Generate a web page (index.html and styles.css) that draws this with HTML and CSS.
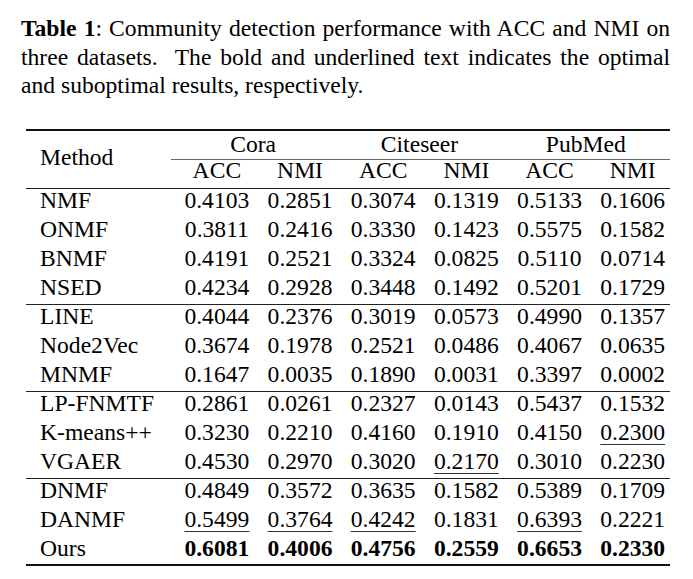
FILE: index.html
```html
<!DOCTYPE html>
<html lang="en">
<head>
<meta charset="utf-8">
<title>Table 1</title>
<link rel="stylesheet" href="styles.css">
</head>
<body>
<div class="page">
  <p class="caption">
    <span class="line"><b>Table 1</b>: Community detection performance with ACC and NMI on</span>
    <span class="line">three datasets.&nbsp; The bold and underlined text indicates the optimal</span>
    <span class="line last">and suboptimal results, respectively.</span>
  </p>

  <div class="table">
    <div class="thead">
      <div class="method-h">Method</div>
      <div class="ds">Cora</div>
      <div class="ds">Citeseer</div>
      <div class="ds">PubMed</div>
      <div class="sub">ACC</div>
      <div class="sub">NMI</div>
      <div class="sub">ACC</div>
      <div class="sub">NMI</div>
      <div class="sub">ACC</div>
      <div class="sub">NMI</div>
    </div>

    <div class="tbody">
      <div class="row first">
        <div class="m">NMF</div><div class="n">0.4103</div><div class="n">0.2851</div><div class="n">0.3074</div><div class="n">0.1319</div><div class="n">0.5133</div><div class="n">0.1606</div>
      </div>
      <div class="row">
        <div class="m">ONMF</div><div class="n">0.3811</div><div class="n">0.2416</div><div class="n">0.3330</div><div class="n">0.1423</div><div class="n">0.5575</div><div class="n">0.1582</div>
      </div>
      <div class="row">
        <div class="m">BNMF</div><div class="n">0.4191</div><div class="n">0.2521</div><div class="n">0.3324</div><div class="n">0.0825</div><div class="n">0.5110</div><div class="n">0.0714</div>
      </div>
      <div class="row">
        <div class="m">NSED</div><div class="n">0.4234</div><div class="n">0.2928</div><div class="n">0.3448</div><div class="n">0.1492</div><div class="n">0.5201</div><div class="n">0.1729</div>
      </div>

      <div class="row first">
        <div class="m">LINE</div><div class="n">0.4044</div><div class="n">0.2376</div><div class="n">0.3019</div><div class="n">0.0573</div><div class="n">0.4990</div><div class="n">0.1357</div>
      </div>
      <div class="row">
        <div class="m">Node2Vec</div><div class="n">0.3674</div><div class="n">0.1978</div><div class="n">0.2521</div><div class="n">0.0486</div><div class="n">0.4067</div><div class="n">0.0635</div>
      </div>
      <div class="row">
        <div class="m">MNMF</div><div class="n">0.1647</div><div class="n">0.0035</div><div class="n">0.1890</div><div class="n">0.0031</div><div class="n">0.3397</div><div class="n">0.0002</div>
      </div>

      <div class="row first">
        <div class="m">LP-FNMTF</div><div class="n">0.2861</div><div class="n">0.0261</div><div class="n">0.2327</div><div class="n">0.0143</div><div class="n">0.5437</div><div class="n">0.1532</div>
      </div>
      <div class="row">
        <div class="m">K-means++</div><div class="n">0.3230</div><div class="n">0.2210</div><div class="n">0.4160</div><div class="n">0.1910</div><div class="n">0.4150</div><div class="n"><span class="second">0.2300</span></div>
      </div>
      <div class="row">
        <div class="m">VGAER</div><div class="n">0.4530</div><div class="n">0.2970</div><div class="n">0.3020</div><div class="n"><span class="second">0.2170</span></div><div class="n">0.3010</div><div class="n">0.2230</div>
      </div>

      <div class="row first">
        <div class="m">DNMF</div><div class="n">0.4849</div><div class="n">0.3572</div><div class="n">0.3635</div><div class="n">0.1582</div><div class="n">0.5389</div><div class="n">0.1709</div>
      </div>
      <div class="row">
        <div class="m">DANMF</div><div class="n"><span class="second">0.5499</span></div><div class="n"><span class="second">0.3764</span></div><div class="n"><span class="second">0.4242</span></div><div class="n">0.1831</div><div class="n"><span class="second">0.6393</span></div><div class="n">0.2221</div>
      </div>
      <div class="row">
        <div class="m">Ours</div><div class="n best">0.6081</div><div class="n best">0.4006</div><div class="n best">0.4756</div><div class="n best">0.2559</div><div class="n best">0.6653</div><div class="n best">0.2330</div>
      </div>
    </div>
  </div>
</div>
</body>
</html>
```

FILE: styles.css
```css
html, body {
  margin: 0;
  padding: 0;
  background: #ffffff;
}

body {
  font-family: "Liberation Serif", "Times New Roman", serif;
  font-size: 23.6px;
  color: #000000;
}

.page {
  padding: 14px 0 0 21px;
  width: 649px;
}

.caption {
  margin: 0;
  line-height: 28.5px;
}

.caption .line {
  display: block;
  text-align: justify;
  text-align-last: justify;
  white-space: nowrap;
}

.caption .line.last {
  text-align-last: left;
}

.caption b {
  font-weight: bold;
}

.table {
  margin: 29.5px 0 0 5px;
  width: 644px;
}

.thead {
  display: grid;
  grid-template-columns: 145px repeat(6, 1fr);
  grid-template-rows: 26px 26px;
  line-height: 26px;
  border-top: 2px solid #111;
  padding-bottom: 2.5px;
}

.method-h {
  grid-row: 1 / 3;
  grid-column: 1;
  align-self: center;
  padding-left: 14px;
}

.ds {
  grid-row: 1;
  grid-column: span 2;
  text-align: center;
  padding-right: 2px;
}

.sub {
  grid-row: 2;
  text-align: center;
  padding-left: 8.6px;
  background: linear-gradient(#666, #666) 0 1.8px / 100% 1px no-repeat;
}

.tbody {
  border-bottom: 2px solid #111;
  padding-bottom: 1.5px;
}

.row {
  display: grid;
  grid-template-columns: 145px repeat(6, 1fr);
  height: 29px;
  line-height: 29px;
}

.row.first {
  background: linear-gradient(#222, #222) 0 2px / 100% 1px no-repeat;
}

.m {
  padding-left: 14px;
  white-space: nowrap;
}

.n {
  text-align: center;
  padding-left: 8.6px;
  white-space: nowrap;
}

.n.best {
  font-weight: bold;
}

.second {
  text-decoration: underline;
  text-decoration-color: #333;
  text-decoration-thickness: 1px;
  text-underline-offset: 4px;
  text-decoration-skip-ink: none;
}
```
